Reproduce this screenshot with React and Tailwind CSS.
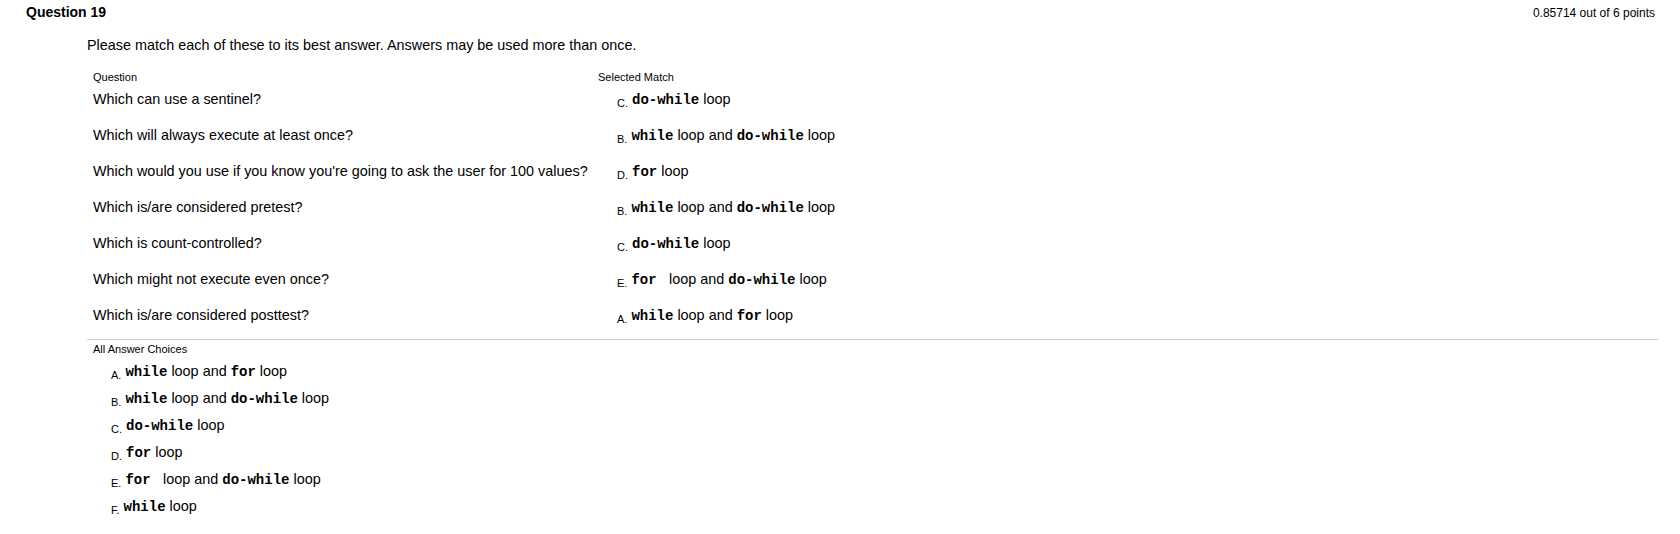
const rows = [
  { q: 'Which can use a sentinel?', a: 'C' },
  { q: 'Which will always execute at least once?', a: 'B' },
  { q: "Which would you use if you know you're going to ask the user for 100 values?", a: 'D' },
  { q: 'Which is/are considered pretest?', a: 'B' },
  { q: 'Which is count-controlled?', a: 'C' },
  { q: 'Which might not execute even once?', a: 'E' },
  { q: 'Which is/are considered posttest?', a: 'A' },
];

function Code({ children }) {
  return (
    <span className="font-bold text-[14px] whitespace-pre" style={{ fontFamily: '"Liberation Mono", "Courier New", monospace' }}>
      {children}
    </span>
  );
}

const answers = {
  A: (
    <>
      <Code>while</Code> loop and <Code>for</Code> loop
    </>
  ),
  B: (
    <>
      <Code>while</Code> loop and <Code>do-while</Code> loop
    </>
  ),
  C: (
    <>
      <Code>do-while</Code> loop
    </>
  ),
  D: (
    <>
      <Code>for</Code> loop
    </>
  ),
  E: (
    <>
      <Code>{'for\u00a0'}</Code> loop and <Code>do-while</Code> loop
    </>
  ),
  F: (
    <>
      <Code>while</Code> loop
    </>
  ),
};

function Choice({ letter }) {
  return (
    <>
      <span className="text-[11px] align-[-3px]">{letter}.</span> {answers[letter]}
    </>
  );
}

export default function App() {
  return (
    <div className="w-full h-[534px] overflow-hidden bg-white text-black font-['Liberation_Sans',Arial,sans-serif]">
      {/* Header */}
      <div className="flex items-baseline justify-between pl-[26px] pr-[25px] pt-[4px]">
        <h2 className="text-[14px] leading-[16px] font-bold">Question 19</h2>
        <div className="text-[12px] leading-[16px]">0.85714 out of 6 points</div>
      </div>

      <div className="ml-[87px] mr-[22px]">
        <p className="mt-[16px] text-[14.4px] leading-[16px]">
          Please match each of these to its best answer. Answers may be used more than once.
        </p>

        {/* Question / Selected Match table */}
        <div className="mt-[18px] grid grid-cols-[505px_1fr]">
          <div className="pl-[6px] text-[11px] leading-[13px]">Question</div>
          <div className="pl-[6px] text-[11px] leading-[13px]">Selected Match</div>
          {rows.map((r) => (
            <div key={r.q} className="contents">
              <div className="h-[36px] pt-[7px] pl-[6px] text-[14.4px] leading-[16px]">{r.q}</div>
              <div className="h-[36px] pt-[7px] pl-[25px] text-[14.4px] leading-[16px] whitespace-nowrap">
                <Choice letter={r.a} />
              </div>
            </div>
          ))}
        </div>

        <div className="mt-[3px] border-t border-[#cdcdcd]" />

        <div className="pt-[3px] pl-[6px] text-[11px] leading-[13px]">All Answer Choices</div>

        <div className="mt-[7px] pl-[24px]">
          {['A', 'B', 'C', 'D', 'E', 'F'].map((l) => (
            <div key={l} className="h-[27px] text-[14.4px] leading-[16px] whitespace-nowrap">
              <Choice letter={l} />
            </div>
          ))}
        </div>
      </div>
    </div>
  );
}
